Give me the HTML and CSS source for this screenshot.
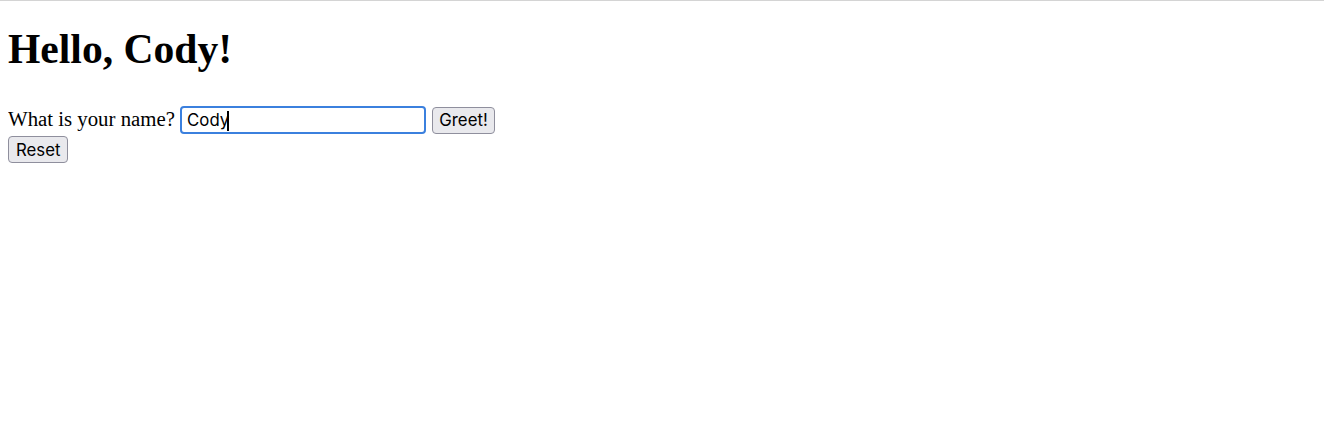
FILE: index.html
```html
<!DOCTYPE html>
<html>
<head>
<meta charset="utf-8">
<title>Greeter</title>
<link rel="stylesheet" href="styles.css">
</head>
<body>
<h1 class="greeting">Hello, Cody!</h1>
<form class="greet-form">
<label class="name-label" for="name">What is your name?</label>
<span class="field"><input class="name-input" id="name" type="text" value="Cody"><span class="caret"></span></span>
<button class="btn" type="submit">Greet!</button><br>
<button class="btn btn-reset" type="button">Reset</button>
</form>
</body>
</html>
```
FILE: styles.css
```css
html {
  border-top: 1px solid #d4d4d4;
}
body {
  margin: 8px;
  font-family: "Liberation Serif", "Times New Roman", serif;
  font-size: 20.8px;
  color: #000;
}
.greeting {
  font-size: 41.6px;
  font-weight: bold;
  margin: 15.5px 0 33.5px;
}
.greet-form {
  margin: 0;
}
.field {
  position: relative;
  display: inline-block;
}
.name-input {
  box-sizing: border-box;
  width: 246px;
  height: 28px;
  margin: 0;
  padding: 0 5px;
  border: 2px solid #3b80de;
  border-radius: 4px;
  outline: none;
  font-family: "Inter", "Liberation Sans", sans-serif;
  font-size: 16.8px;
  color: #000;
  vertical-align: baseline;
}
.caret {
  position: absolute;
  left: 47px;
  top: 5px;
  width: 2px;
  height: 20px;
  background: #000;
}
.btn {
  box-sizing: border-box;
  height: 27px;
  margin: 0 0 0 1px;
  padding: 0 6px;
  background: #e9e9ed;
  border: 1px solid #8f8f9d;
  border-radius: 4px;
  font-family: "Inter", "Liberation Sans", sans-serif;
  font-size: 16.8px;
  color: #000;
}
.btn-reset {
  margin: 2px 0 0 0;
  padding: 0 7px;
}
```
